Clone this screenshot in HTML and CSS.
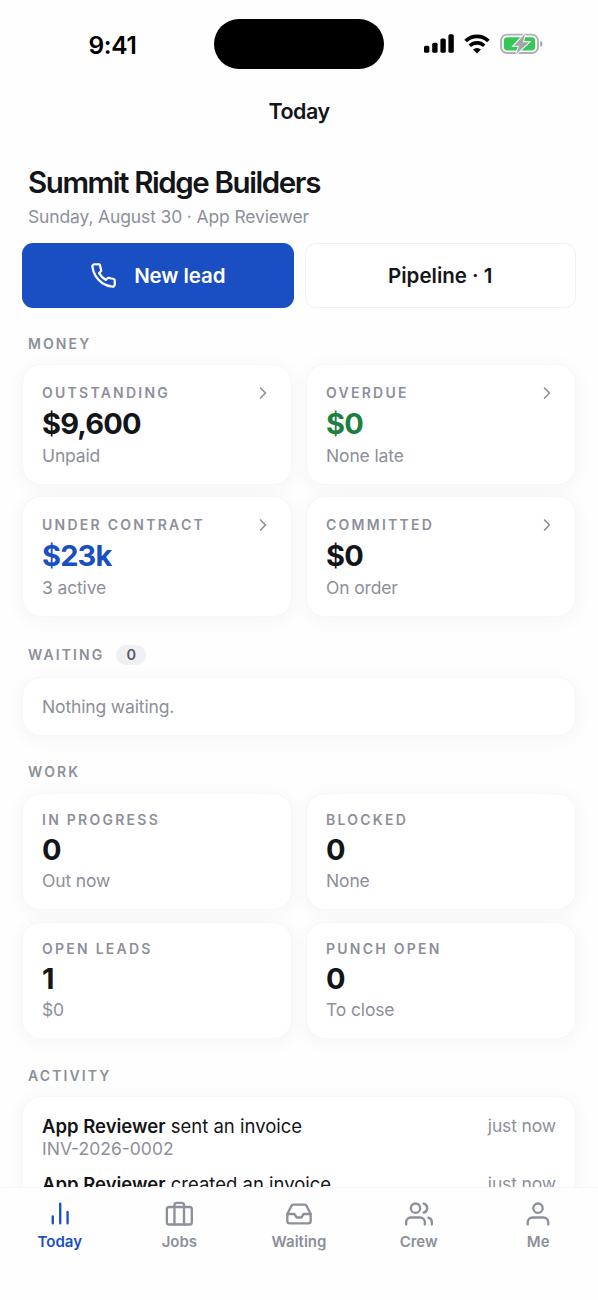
FILE: index.html
```html
<!DOCTYPE html>
<html lang="en">
<head>
<meta charset="utf-8">
<title>Today</title>
<link rel="stylesheet" href="styles.css">
</head>
<body>
<div class="phone">
  <header class="status">
    <div class="time">9:41</div>
    <div class="island"></div>
    <div class="indicators">
      <svg class="signal" width="30" height="20" viewBox="0 0 30 20"><rect x="0" y="12.8" width="5.4" height="7" rx="1.6"/><rect x="8.2" y="9.7" width="5.4" height="10.1" rx="1.6"/><rect x="16.4" y="5.5" width="5.4" height="14.3" rx="1.6"/><rect x="24.4" y="1.3" width="5.4" height="18.5" rx="1.6"/></svg>
      <svg class="wifi" width="26" height="20" viewBox="0 0 26 20"><path d="M1.6 7a16.4 16.4 0 0 1 22.8 0" fill="none" stroke="#000" stroke-width="3.8"/><path d="M5.8 11.8a10.3 10.3 0 0 1 14.4 0" fill="none" stroke="#000" stroke-width="3.6"/><path d="M13 19.4l-3.9-3.9a5.6 5.6 0 0 1 7.8 0z"/></svg>
      <svg class="battery" width="43" height="22" viewBox="0 0 43 22"><rect x="1" y="1.6" width="37" height="18.4" rx="6" fill="#fff" stroke="#b0b0b3" stroke-width="1.8"/><rect x="3.8" y="4.2" width="31.4" height="13.2" rx="3.6" fill="#34c759"/><path d="M40.2 7.8c3 1 3 5.2 0 6.2z" fill="#a5a5a8"/><path d="M24.6 1.6L14.4 12.4h5.2L16.6 20.4 28.4 9.4h-6z" fill="none" stroke="#fff" stroke-width="2.6"/><path d="M24.6 1.6L14.4 12.4h5.2L16.6 20.4 28.4 9.4h-6z" fill="#a5a5a8" stroke="#a5a5a8" stroke-width=".6"/></svg>
    </div>
  </header>
  <div class="navbar">Today</div>

  <main class="content">
    <div class="heading">
      <h1 class="company">Summit Ridge Builders</h1>
      <p class="subtitle">Sunday, August 30 · App Reviewer</p>
    </div>
    <div class="actions">
      <button class="btn btn-primary"><svg class="phone-icon" width="27" height="27" viewBox="0 0 24 24"><path d="M22 16.92v3a2 2 0 0 1-2.18 2 19.79 19.79 0 0 1-8.63-3.07 19.5 19.5 0 0 1-6-6 19.79 19.79 0 0 1-3.07-8.67A2 2 0 0 1 4.11 2h3a2 2 0 0 1 2 1.72 12.84 12.84 0 0 0 .7 2.81 2 2 0 0 1-.45 2.11L8.09 9.91a16 16 0 0 0 6 6l1.27-1.27a2 2 0 0 1 2.11-.45 12.84 12.84 0 0 0 2.81.7A2 2 0 0 1 22 16.92z"/></svg><span>New lead</span></button>
      <button class="btn btn-outline">Pipeline · 1</button>
    </div>

    <h2 class="section section-money">Money</h2>
    <div class="grid grid-money">
      <article class="card money">
        <div class="label"><span>Outstanding</span><svg class="chevron" width="20" height="20" viewBox="0 0 24 24"><path d="M9 18l6-6-6-6"/></svg></div>
        <div class="value">$9,600</div><div class="note">Unpaid</div>
      </article>
      <article class="card money">
        <div class="label"><span>Overdue</span><svg class="chevron" width="20" height="20" viewBox="0 0 24 24"><path d="M9 18l6-6-6-6"/></svg></div>
        <div class="value green">$0</div><div class="note">None late</div>
      </article>
      <article class="card money">
        <div class="label"><span>Under contract</span><svg class="chevron" width="20" height="20" viewBox="0 0 24 24"><path d="M9 18l6-6-6-6"/></svg></div>
        <div class="value blue">$23k</div><div class="note">3 active</div>
      </article>
      <article class="card money">
        <div class="label"><span>Committed</span><svg class="chevron" width="20" height="20" viewBox="0 0 24 24"><path d="M9 18l6-6-6-6"/></svg></div>
        <div class="value">$0</div><div class="note">On order</div>
      </article>
    </div>

    <h2 class="section section-waiting">Waiting <span class="count">0</span></h2>
    <div class="card empty">Nothing waiting.</div>

    <h2 class="section section-work">Work</h2>
    <div class="grid">
      <article class="card"><div class="label">In progress</div><div class="value">0</div><div class="note">Out now</div></article>
      <article class="card"><div class="label">Blocked</div><div class="value">0</div><div class="note">None</div></article>
      <article class="card"><div class="label">Open leads</div><div class="value">1</div><div class="note">$0</div></article>
      <article class="card"><div class="label">Punch open</div><div class="value">0</div><div class="note">To close</div></article>
    </div>

    <h2 class="section section-activity">Activity</h2>
    <div class="card activity">
      <div class="event"><div><p class="what"><b>App Reviewer</b> sent an invoice</p><p class="ref">INV-2026-0002</p></div><time class="when">just now</time></div>
      <div class="event"><div><p class="what"><b>App Reviewer</b> created an invoice</p></div><time class="when">just now</time></div>
    </div>
  </main>

  <nav class="tabs">
    <a class="tab active"><svg width="28" height="28" viewBox="0 0 24 24"><path d="M18.5 20v-9.8M12.2 20V3.2M5.8 20v-6"/></svg><span>Today</span></a>
    <a class="tab"><svg width="28" height="28" viewBox="0 0 24 24"><rect x="1.6" y="6" width="21.4" height="15" rx="2"/><path d="M8.1 21V4.4a2 2 0 0 1 2-2h4.2a2 2 0 0 1 2 2V21"/></svg><span>Jobs</span></a>
    <a class="tab"><svg width="28" height="28" viewBox="0 0 24 24"><path d="M22 12h-6l-2 3h-4l-2-3H2"/><path d="M5.45 5.11L2 12v6a2 2 0 0 0 2 2h16a2 2 0 0 0 2-2v-6l-3.45-6.89A2 2 0 0 0 16.76 4H7.24a2 2 0 0 0-1.79 1.11z"/></svg><span>Waiting</span></a>
    <a class="tab"><svg width="28" height="28" viewBox="0 0 24 24"><path d="M17 21v-2a4 4 0 0 0-4-4H5a4 4 0 0 0-4 4v2"/><circle cx="9" cy="7" r="4"/><path d="M23 21v-2a4 4 0 0 0-3-3.87M16 3.13a4 4 0 0 1 0 7.75"/></svg><span>Crew</span></a>
    <a class="tab"><svg width="28" height="28" viewBox="0 0 24 24"><path d="M20.8 21v-2a4 4 0 0 0-4-4H7.2a4 4 0 0 0-4 4v2"/><circle cx="12" cy="7" r="4"/></svg><span>Me</span></a>
  </nav>
</div>
</body>
</html>
```
FILE: styles.css
```css
* { box-sizing: border-box; }
body, h1, h2, p { margin: 0; }
body { background: #fefefe; color: #141518; font-family: Inter, "Liberation Sans", sans-serif; }
.phone { width: 598px; height: 1300px; display: flex; flex-direction: column; overflow: hidden; }

.status { flex: none; height: 88px; display: grid; grid-template-columns: 214px 170px 1fr; }
.time { padding: 30px 0 0 11px; text-align: center; font-size: 24.5px; line-height: 30px; font-weight: 600; letter-spacing: -0.3px; color: #000; }
.island { height: 50px; margin-top: 19px; border-radius: 25px; background: #000; }
.indicators { display: flex; align-items: flex-start; padding: 33px 0 0 40px; }
.wifi { margin: 1px 0 0 10px; }
.battery { margin-left: 10px; }

.navbar { flex: none; height: 46px; line-height: 46px; text-align: center; font-size: 21.5px; font-weight: 600; letter-spacing: -0.5px; }

.content { flex: 1; min-height: 0; overflow: hidden; padding: 28px 22px 0; }
.heading { padding-left: 6px; }
.company { font-size: 29.5px; line-height: 40px; font-weight: 600; letter-spacing: -1.4px; }
.subtitle { margin-top: 4px; font-size: 17.5px; line-height: 22px; letter-spacing: -0.14px; color: #8c909b; }
.actions { display: grid; grid-template-columns: 1fr 1fr; gap: 11px; margin-top: 15px; }
.btn { height: 65px; padding: 0; border: 0; border-radius: 11px; display: flex; align-items: center; justify-content: center; gap: 17px; font: 600 20.5px/26px Inter, "Liberation Sans", sans-serif; }
.btn-primary { background: #1a4fc4; color: #fff; letter-spacing: -0.1px; }
.btn-outline { background: #fff; color: #141518; border: 1px solid #f0f0f2; }
.phone-icon { fill: none; stroke: #fff; stroke-width: 2; stroke-linejoin: round; }

.section { padding-left: 6px; height: 20px; display: flex; align-items: center; font-size: 14px; line-height: 20px; font-weight: 600; letter-spacing: 2.1px; text-transform: uppercase; color: #8c909b; }
.section-money { margin: 26px 0 10px; }
.section-waiting { margin: 28px 0 12px; }
.section-work { margin: 26px 0 11px; }
.section-activity { margin: 27px 0 10px; }
.count { margin-left: 12px; width: 30px; height: 20px; border-radius: 10px; background: #eff0f4; color: #565a64; text-align: center; letter-spacing: 0; font-size: 14.5px; }

.grid { display: grid; grid-template-columns: 270px 270px; justify-content: space-between; row-gap: 12px; }
.grid-money { row-gap: 11px; }
.card { height: 117px; padding: 17px 19px 0; border: 1px solid #f7f7f9; border-radius: 19px; background: #fff; box-shadow: 0 3px 20px rgba(30, 35, 60, .045); }
.card.money { height: 121px; }
.label { height: 18px; display: flex; align-items: center; justify-content: space-between; font-size: 14px; line-height: 18px; font-weight: 600; letter-spacing: 2.25px; text-transform: uppercase; color: #8c909b; }
.money .label { height: 22px; }
.chevron { margin-right: -1px; fill: none; stroke: #8c909b; stroke-width: 2; stroke-linecap: round; stroke-linejoin: round; }
.value { margin-top: 3px; font-size: 29px; line-height: 36px; font-weight: 700; letter-spacing: -0.85px; }
.money .value { margin-top: 2px; }
.green { color: #1d7f40; }
.blue { color: #1a4fc4; }
.note { margin-top: 2px; font-size: 17.5px; line-height: 22px; letter-spacing: -0.14px; color: #8c909b; }
.money .note { margin-top: 3px; }
.card.empty { height: 59px; padding-top: 16px; font-size: 17.5px; line-height: 25px; letter-spacing: -0.14px; color: #8c909b; }
.card.activity { height: 240px; display: flex; flex-direction: column; gap: 12px; }
.event { display: flex; justify-content: space-between; font-size: 18.5px; }
.what { line-height: 24px; }
.what b { font-weight: 600; }
.ref { line-height: 22px; font-size: 17.5px; color: #8c909b; }
.when { line-height: 24px; font-size: 17.5px; letter-spacing: -0.14px; color: #8c909b; }

.tabs { flex: none; position: relative; height: 113px; padding-top: 12px; border-top: 1px solid #f6f6f8; background: #fefefe; display: grid; grid-template-columns: repeat(5, 1fr); }
.tab { display: flex; flex-direction: column; align-items: center; color: #8c909b; font-size: 15px; line-height: 20px; font-weight: 600; }
.tab svg { fill: none; stroke: currentColor; stroke-width: 2; stroke-linecap: round; stroke-linejoin: round; }
.tab span { margin-top: 4px; }
.tab.active { color: #1a4fc4; }
```
